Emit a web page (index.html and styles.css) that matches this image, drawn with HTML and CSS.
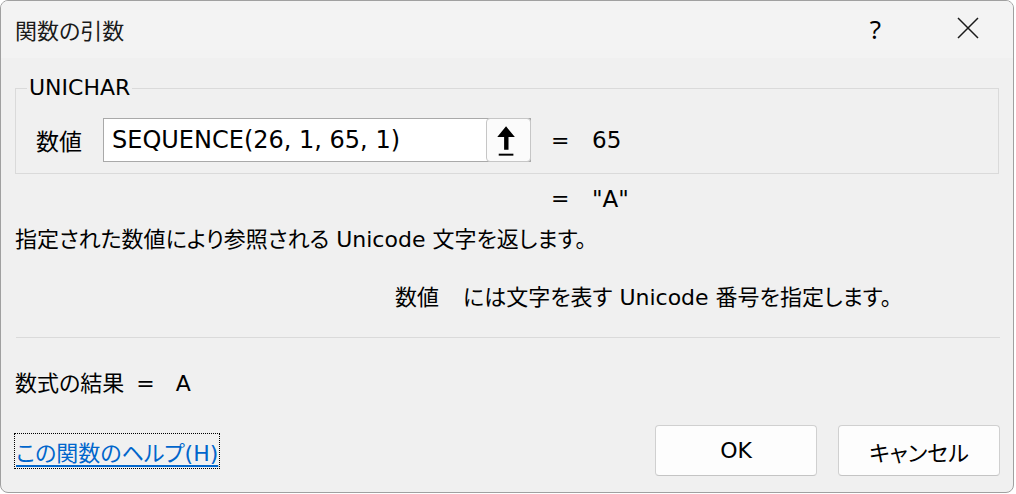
FILE: index.html
```html
<!DOCTYPE html>
<html lang="ja">
<head>
    <meta charset="UTF-8">
    <title>関数の引数</title>
    <link rel="stylesheet" href="styles.css">
</head>
<body>
    <div class="dialog">
        <div class="titlebar">
            <span class="title">関数の引数</span>
            <span class="help">?</span>
            <svg class="close" width="22" height="22" viewBox="0 0 22 22">
                <path d="M1 1 L21 21 M21 1 L1 21" stroke="#1a1a1a" stroke-width="1.5" fill="none"/>
            </svg>
        </div>
        <div class="content">
            <fieldset class="args">
                <legend>UNICHAR</legend>
                <div class="arg-row">
                    <label class="arg-label">数値</label>
                    <div class="ref-input">
                        <span class="ref-text">SEQUENCE(26, 1, 65, 1)</span>
                        <button class="collapse" type="button">
                            <svg width="44" height="43" viewBox="0 0 44 43">
                                <path d="M19.5 7 L28.5 18 L22 18 L22 31 L17.5 31 L17.5 18 L10.5 18 Z" fill="#000"/>
                                <rect x="12" y="35" width="15" height="2" fill="#000"/>
                            </svg>
                        </button>
                    </div>
                    <span class="eq">=</span>
                    <span class="val">65</span>
                </div>
            </fieldset>
            <div class="result-row">
                <span class="eq">=</span>
                <span class="val">"A"</span>
            </div>
            <p class="desc">指定された数値により参照される Unicode 文字を返します。</p>
            <p class="arg-desc"><span class="arg-name">数値</span>には文字を表す Unicode 番号を指定します。</p>
            <hr class="sep">
            <div class="formula">
                <span>数式の結果</span>
                <span class="formula-eq">=</span>
                <span>A</span>
            </div>
            <div class="footer">
                <a class="help-link" href="#">この関数のヘルプ(H)</a>
                <div class="buttons">
                    <button class="btn" type="button">OK</button>
                    <button class="btn" type="button">キャンセル</button>
                </div>
            </div>
        </div>
    </div>
</body>
</html>
```
FILE: styles.css
```css
body {
    margin: 0;
    background-color: #ffffff;
    font-family: "DejaVu Sans", "Noto Sans CJK JP", sans-serif;
    font-size: 22px;
    font-feature-settings: "palt";
    color: #000000;
}

.dialog {
    width: 1014px;
    height: 493px;
    box-sizing: border-box;
    border: 1px solid #a0a0a0;
    border-radius: 8px;
    background-color: #f0f0f0;
    overflow: hidden;
}

.titlebar {
    height: 57px;
    display: flex;
    align-items: center;
    background-color: #f3f3f3;
    padding: 0 34px 0 14px;
}

.title {
    flex: 1;
    font-size: 22px;
    color: #1a1a1a;
    padding-bottom: 2px;
}

.help {
    font-family: "Noto Sans", sans-serif;
    font-size: 26px;
    margin-right: 76px;
    padding-bottom: 2px;
}

.close {
    margin-top: -4px;
}

.content {
    padding: 0 13px 0 14px;
}

.args {
    margin: 18px 1px 0 0;
    padding: 18px 0 11px 11px;
    border: 1px solid #dadada;
}

.args legend {
    padding: 0 2px;
    line-height: 24px;
}

.arg-row {
    display: flex;
    align-items: center;
}

.arg-label {
    margin-left: 9px;
    width: 67px;
    font-size: 23px;
}

.ref-input {
    width: 428px;
    height: 44px;
    box-sizing: border-box;
    display: flex;
    align-items: center;
    background-color: #ffffff;
    border: 1px solid #a9a9a9;
}

.ref-text {
    flex: 1;
    padding-left: 8px;
    font-size: 24px;
}

.collapse {
    width: 45px;
    height: 44px;
    margin: -2px -1px -1px 0;
    padding: 0;
    border: 1px solid #c6c6c6;
    border-radius: 4px;
    background-color: #fbfbfb;
    display: flex;
}

.eq {
    width: 41px;
    margin-left: 20px;
    font-size: 22px;
}

.val {
    font-size: 23px;
}

.result-row {
    display: flex;
    align-items: center;
    line-height: 30px;
    margin-top: 10px;
    padding-left: 536px;
}

.result-row .eq {
    margin-left: 0;
}

.desc {
    margin: 11px 0 0;
    line-height: 30px;
}

.arg-desc {
    margin: 28px 0 0;
    padding-left: 380px;
    line-height: 30px;
}

.arg-name {
    display: inline-block;
    width: 68px;
}

.sep {
    margin: 24px 0 0 1px;
    border: 0;
    border-top: 1px solid #dadada;
}

.formula {
    margin-top: 31px;
    line-height: 30px;
    display: flex;
}

.formula-eq {
    margin: 0 21px 0 12px;
}

.footer {
    margin-top: 26px;
    display: flex;
    align-items: center;
    justify-content: space-between;
}

.help-link {
    color: #0066cc;
    text-decoration: underline;
    text-underline-offset: 4px;
    text-decoration-thickness: 2px;
    outline: 1px dotted #000000;
    outline-offset: 1px;
    margin-left: 1px;
}

.buttons {
    display: flex;
    gap: 21px;
}

.btn {
    width: 162px;
    height: 51px;
    background-color: #fdfdfd;
    border: 1px solid #d0d0d0;
    border-bottom-color: #c4c4c4;
    border-radius: 4px;
    font-family: "DejaVu Sans", "Noto Sans CJK JP", sans-serif;
    font-feature-settings: "palt";
    font-size: 22px;
    color: #000000;
}
```
